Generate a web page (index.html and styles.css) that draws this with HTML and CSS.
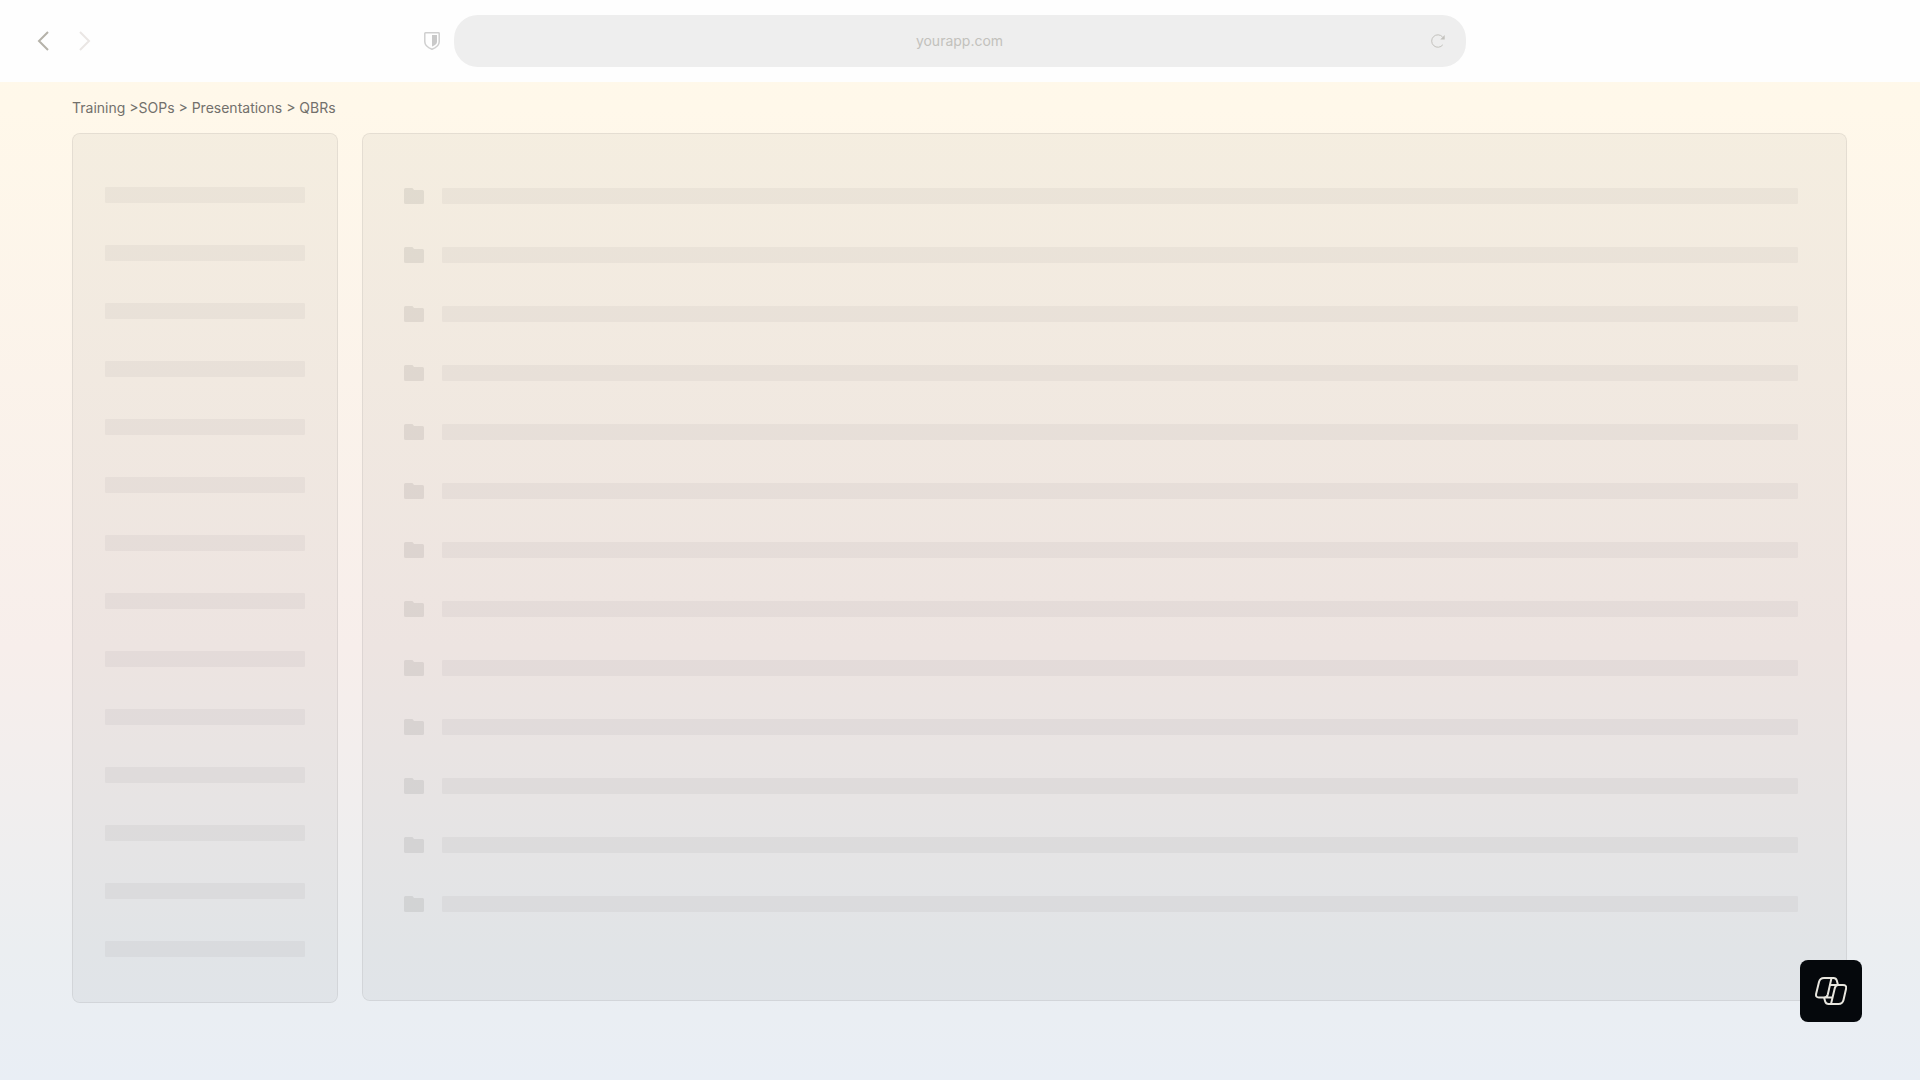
FILE: index.html
```
<!DOCTYPE html>
<html lang="en">
<head>
<meta charset="utf-8">
<meta name="viewport" content="width=device-width, initial-scale=1">
<title>yourapp.com</title>
<link rel="stylesheet" href="styles.css">
</head>
<body>
<header class="toolbar">
  <div class="leading">
    <nav class="history" aria-label="History">
      <button class="icon-button back" type="button" aria-label="Back"><svg width="12" height="20" viewBox="0 0 12 20"><path d="M11 1 2 10l9 9"/></svg></button>
      <button class="icon-button forward" type="button" aria-label="Forward"><svg width="12" height="20" viewBox="0 0 12 20"><path d="m1 1 9 9-9 9"/></svg></button>
    </nav>
    <svg class="shield" width="16" height="18" viewBox="0 0 16 18" aria-hidden="true"><path class="outline" d="M1.500.8h13q.7 0 .7.7v8.200c0 3.800-4 6.300-7.200 7.500C4.800 16 .8 13.500.8 9.700V1.500q0-.7.7-.7z"/><path class="half" d="M8 3h5v7c0 2-2.800 3.600-5 4.500z"/></svg>
  </div>
  <div class="address">
    <input class="address-input" type="text" value="yourapp.com" aria-label="Address">
    <button class="icon-button reload" type="button" aria-label="Reload"><svg width="14" height="14" viewBox="0 0 14 14"><path class="arc" d="M11.800 10.800A6.200 6.200 0 1 1 11.600 3"/><path class="tip" d="M13.700 1v4.600H9.300z"/></svg></button>
  </div>
</header>
<main class="page">
  <nav class="breadcrumb" aria-label="Breadcrumb"><a href="#">Training</a> &gt;<a href="#">SOPs</a> &gt; <a href="#">Presentations</a> &gt; <a href="#">QBRs</a></nav>
  <div class="panels">
    <aside class="panel sidebar">
      <ul class="lines">
        <li class="bar"></li><li class="bar"></li><li class="bar"></li><li class="bar"></li><li class="bar"></li><li class="bar"></li><li class="bar"></li>
        <li class="bar"></li><li class="bar"></li><li class="bar"></li><li class="bar"></li><li class="bar"></li><li class="bar"></li><li class="bar"></li>
      </ul>
    </aside>
    <section class="panel content">
      <svg class="symbols" aria-hidden="true"><symbol id="folder" viewBox="0 0 20 16"><path d="M1.500 0H8q.8 0 1.200.7L10 2h8.500Q20 2 20 3.500v11q0 1.500-1.500 1.500h-17Q0 16 0 14.500v-13Q0 0 1.500 0z"/></symbol></svg>
      <ul class="files">
        <li class="file"><svg class="folder"><use href="#folder"/></svg><span class="bar"></span></li>
        <li class="file"><svg class="folder"><use href="#folder"/></svg><span class="bar"></span></li>
        <li class="file"><svg class="folder"><use href="#folder"/></svg><span class="bar"></span></li>
        <li class="file"><svg class="folder"><use href="#folder"/></svg><span class="bar"></span></li>
        <li class="file"><svg class="folder"><use href="#folder"/></svg><span class="bar"></span></li>
        <li class="file"><svg class="folder"><use href="#folder"/></svg><span class="bar"></span></li>
        <li class="file"><svg class="folder"><use href="#folder"/></svg><span class="bar"></span></li>
        <li class="file"><svg class="folder"><use href="#folder"/></svg><span class="bar"></span></li>
        <li class="file"><svg class="folder"><use href="#folder"/></svg><span class="bar"></span></li>
        <li class="file"><svg class="folder"><use href="#folder"/></svg><span class="bar"></span></li>
        <li class="file"><svg class="folder"><use href="#folder"/></svg><span class="bar"></span></li>
        <li class="file"><svg class="folder"><use href="#folder"/></svg><span class="bar"></span></li>
        <li class="file"><svg class="folder"><use href="#folder"/></svg><span class="bar"></span></li>
      </ul>
    </section>
  </div>
</main>
<button class="assistant" type="button" aria-label="Open assistant">
  <svg width="32" height="28" viewBox="0 0 32 28"><path d="M9 1h7.500L12.800 17.500Q12 20.500 9 20.500H4Q.3 20.500 1.200 16.500L4 5Q5 1 9 1zM16 1h2.500Q21 1 21.800 3.500L23 8M23 8h5Q32 8 31 12l-2.500 11q-1 4-5 4H16l3.700-15.500Q20.500 8 23 8zM23 8h-8.500M9 20.500h8.500M9 20.500l1.200 4Q11 27 13.500 27H16"/></svg>
</button>
</body>
</html>
```
FILE: styles.css
```
* { box-sizing: border-box; }
body {
  margin: 0;
  min-height: 100vh;
  display: flex;
  flex-direction: column;
  font-family: Inter, "Liberation Sans", sans-serif;
  background: linear-gradient(180deg, #fff9ea 0%, #fff8ea 10%, #f7eeeb 60%, #ebeef1 88%, #e9eef5 100%);
}
ul { list-style: none; margin: 0; padding: 0; }
svg { display: block; fill: none; }
.icon-button { display: block; padding: 0; border: 0; background: none; }
.toolbar {
  height: 82px;
  display: grid;
  grid-template-columns: 1fr minmax(0, 1012px) 1fr;
  align-items: center;
  background: #fefefe;
}
.leading {
  display: flex;
  align-items: center;
  justify-content: space-between;
  padding: 0 14px 0 37px;
}
.history { display: flex; gap: 30px; }
.history svg { stroke-width: 2; }
.back { stroke: #b5b2a9; }
.forward { stroke: #eae6e4; }
.outline { stroke: #cfcfcf; stroke-width: 1.5; }
.half { fill: #c9c9c9; }
.address {
  height: 52px;
  display: flex;
  align-items: center;
  padding: 0 21px 0 20px;
  border-radius: 24px;
  background: #eee;
}
.address-input {
  flex: 1;
  min-width: 0;
  padding: 0 0 0 14px;
  border: 0;
  outline: 0;
  background: none;
  color: #c2c1bc;
  font: 14px/20px Inter, "Liberation Sans", sans-serif;
  text-align: center;
}
.arc { stroke: #c2c1bc; }
.tip { fill: #c2c1bc; }
.page {
  flex: 1;
  display: flex;
  flex-direction: column;
  padding: 16px 73px 77px 72px;
}
.breadcrumb { margin-bottom: 15px; color: #72706c; font-size: 14px; line-height: 20px; }
.breadcrumb a { color: inherit; text-decoration: none; }
.panels {
  flex: 1;
  display: grid;
  grid-template-columns: 266px 1fr;
  gap: 24px;
}
.panel {
  border: 1px solid rgba(0, 0, 0, .1);
  border-radius: 8px;
  background: rgba(0, 0, 0, .038);
  background-clip: padding-box;
}
.sidebar { padding: 53px 32px 40px; }
.content { margin-bottom: 2px; padding: 54px 48px 40px 41px; }
.bar { display: block; height: 16px; border-radius: 1px; background: rgba(0, 0, 0, .035); }
.lines { display: grid; gap: 42px; }
.symbols { display: none; }
.files { display: grid; gap: 43px; }
.file { display: flex; gap: 18px; }
.file .bar { flex: 1; }
.folder { width: 20px; height: 16px; fill: rgba(0, 0, 0, .075); }
.assistant {
  position: fixed;
  right: 58px;
  bottom: 58px;
  width: 62px;
  height: 62px;
  display: grid;
  place-items: center;
  padding: 0;
  border: 0;
  border-radius: 8px;
  background: #05080c;
  stroke: #e8e6df;
  stroke-width: 2;
}
```
